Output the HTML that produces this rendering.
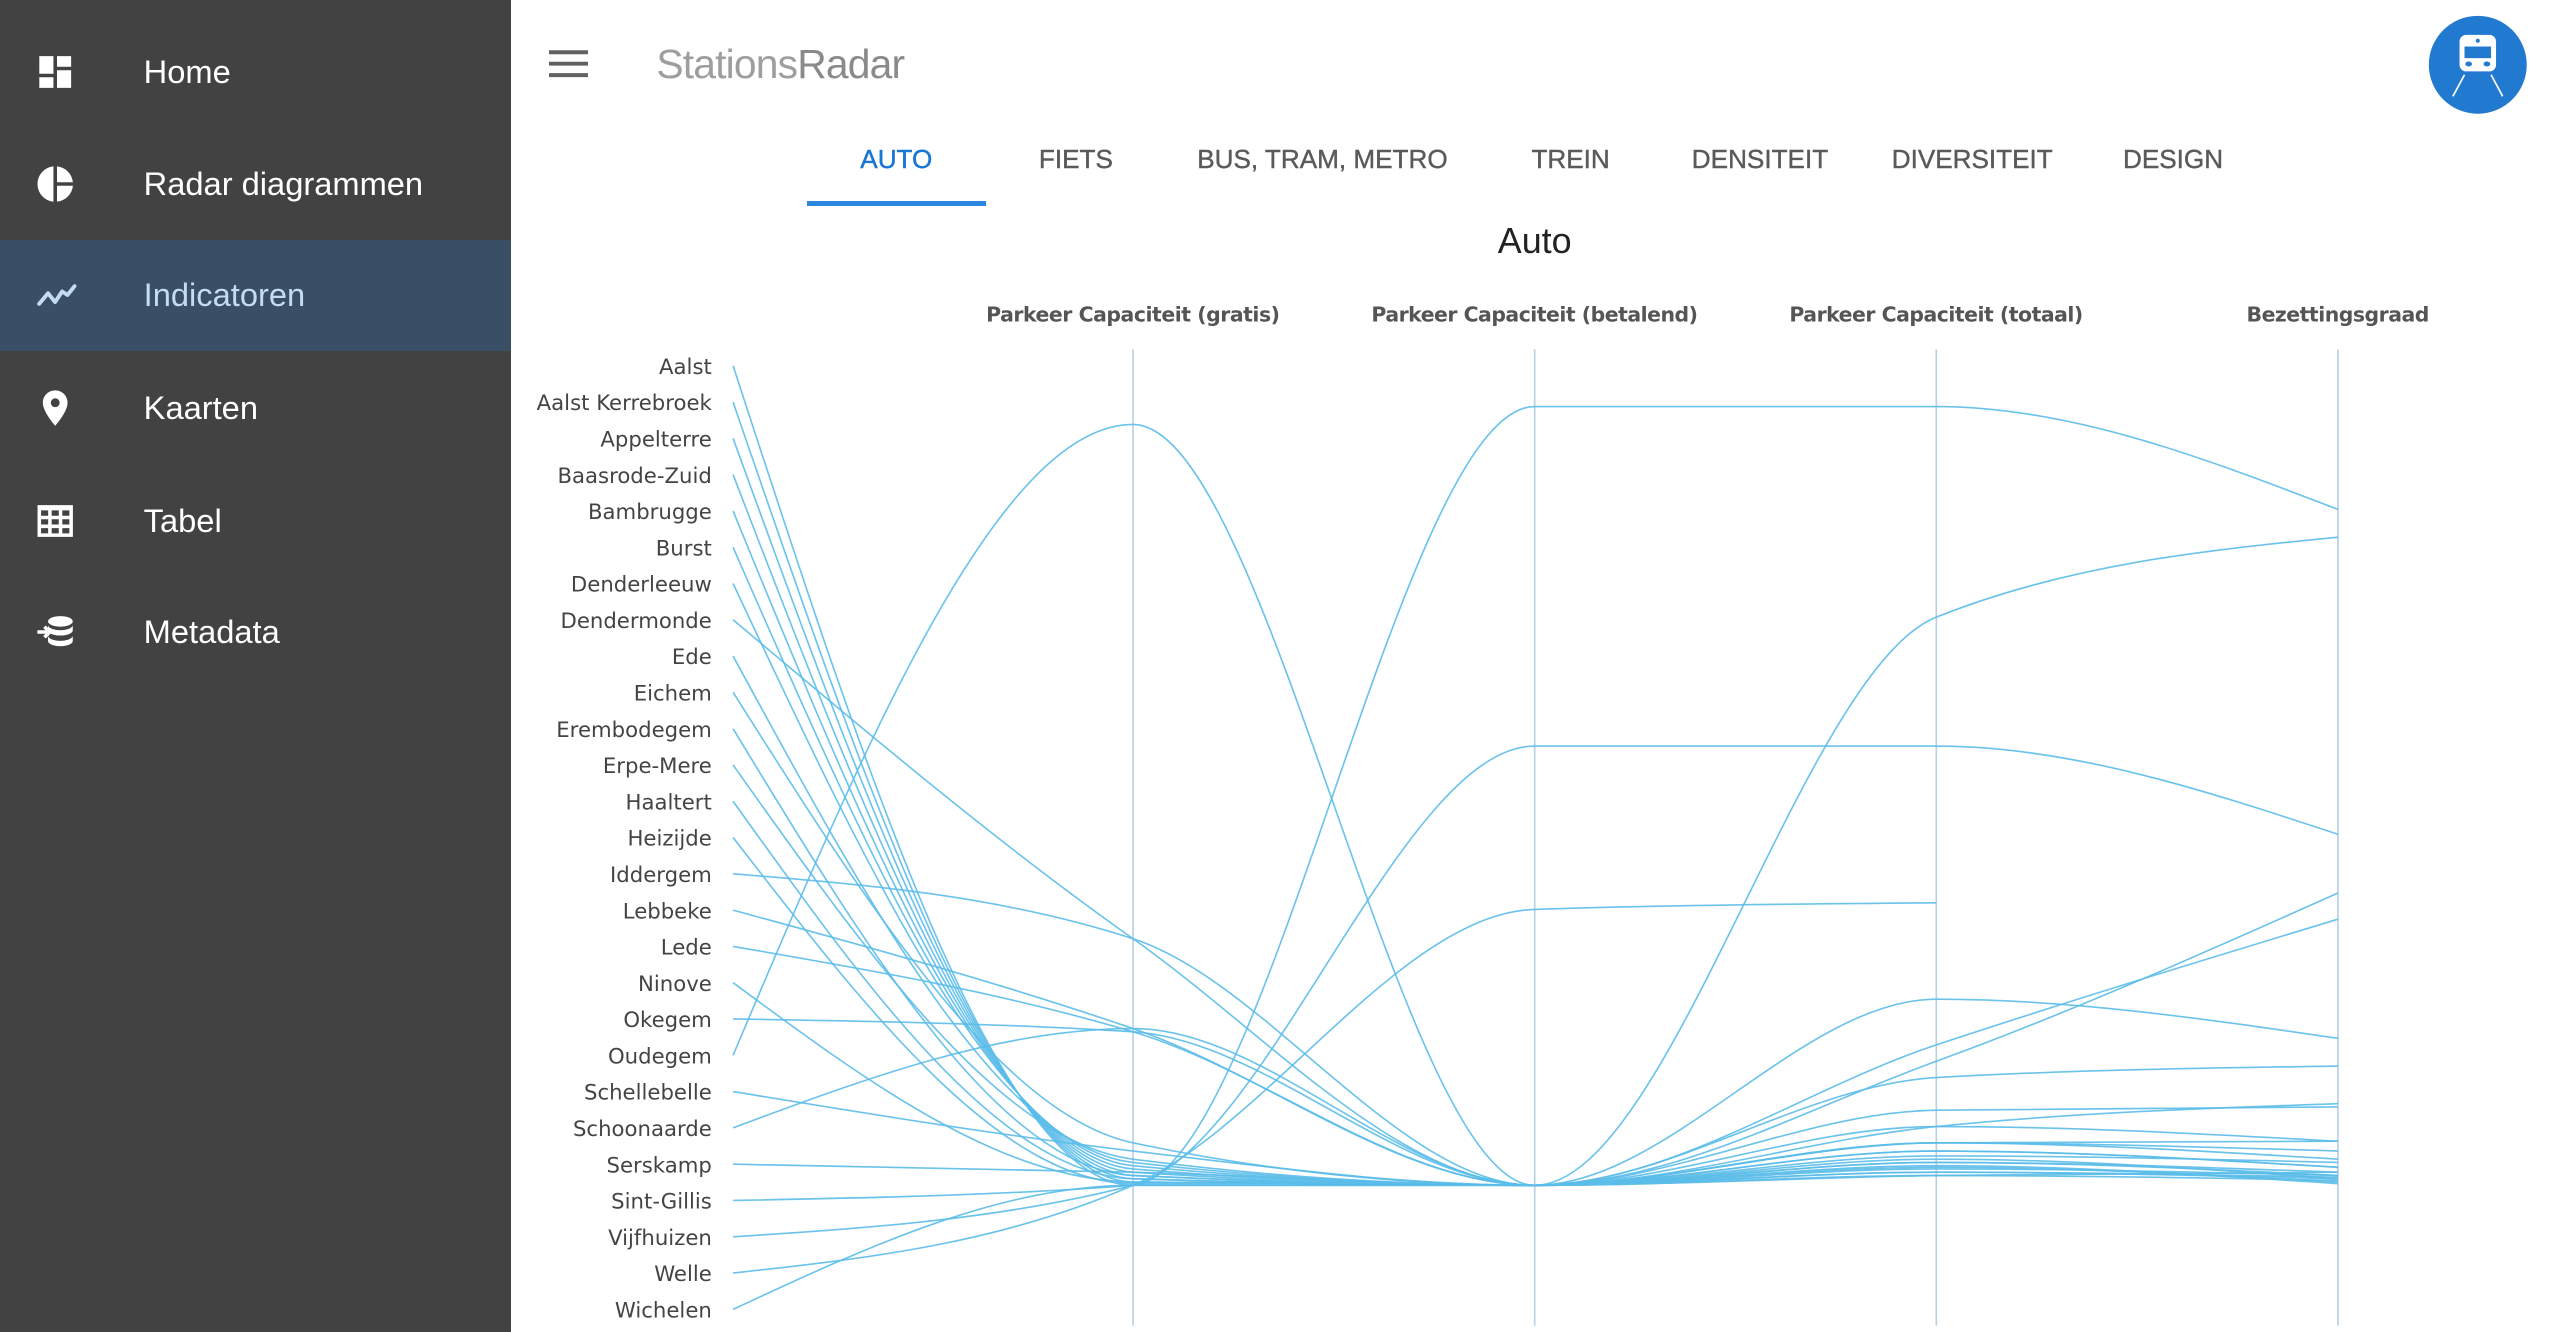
<!DOCTYPE html>
<html><head><meta charset="utf-8">
<style>
html,body{margin:0;padding:0;background:#fff;overflow:hidden}
#root{width:1568px;height:816px;position:relative;zoom:1.632653;font-family:"Liberation Sans",sans-serif}
#side{position:absolute;left:0;top:0;width:313px;height:816px;background:#424242}
.item{position:absolute;left:0;width:313px;height:68px;color:#fff;font-size:20px}
.item span{position:absolute;left:88px;top:50%;transform:translateY(-50%)}
.item svg{position:absolute;left:21px;top:50%;transform:translateY(-50%)}
.act{background:#3a4f65;color:#c3dcf3}
#title{position:absolute;left:402px;top:25px;font-size:25px;color:#9e9e9e;letter-spacing:-0.5px}
#title b{font-weight:normal;color:#8a8a8a}
.tab{position:absolute;top:88px;font-size:16px;color:#5a5a5a;transform:translateX(-50%);white-space:nowrap;-webkit-text-stroke:0.25px currentColor}
#chartT{position:absolute;left:940px;top:135px;transform:translateX(-50%);font-size:22px;color:#222}
</style></head><body>
<div id="root">
<div id="side">
 <div class="item" style="top:10px"><svg width="26" height="26" viewBox="0 0 24 24"><path fill="#fff" d="M3 3h8v10H3zM13 3h8v6h-8zM3 15h8v6H3zM13 11h8v10h-8z"/></svg><span>Home</span></div>
 <div class="item" style="top:79px"><svg width="26" height="26" viewBox="0 0 24 24"><path fill="#fff" d="M11 2v20C5.9 21.5 2 17.2 2 12S5.9 2.5 11 2zm2 0v9h9c-.5-4.8-4.2-8.5-9-9zm0 11v9c4.8-.5 8.5-4.2 9-9z"/></svg><span>Radar diagrammen</span></div>
 <div class="item act" style="top:147px"><svg width="28" height="26" viewBox="0 0 24 24"><path fill="none" stroke="#c3dcf3" stroke-width="2.2" stroke-linecap="round" stroke-linejoin="round" d="M2 17l5-6 4 5 4-6 3 2 4-5"/></svg><span>Indicatoren</span></div>
 <div class="item" style="top:216px"><svg width="26" height="28" viewBox="0 0 24 24"><path fill="#fff" d="M12 2C8.1 2 5 5.1 5 9c0 5.2 7 13 7 13s7-7.8 7-13c0-3.9-3.1-7-7-7zm0 9.5a2.5 2.5 0 110-5 2.5 2.5 0 010 5z"/></svg><span>Kaarten</span></div>
 <div class="item" style="top:285px"><svg width="26" height="26" viewBox="0 0 24 24"><path fill="#fff" d="M2 3h20v18H2z"/><path fill="#424242" d="M4 6h4v3H4zM10 6h4v3h-4zM16 6h4v3h-4zM4 11h4v3H4zM10 11h4v3h-4zM16 11h4v3h-4zM4 16h4v3H4zM10 16h4v3h-4zM16 16h4v3h-4z"/></svg><span>Tabel</span></div>
 <div class="item" style="top:353px"><svg width="28" height="26" viewBox="0 0 24 24"><ellipse cx="14" cy="6" rx="7" ry="3" fill="#fff"/><path fill="#fff" d="M7 8v3c0 1.7 3.1 3 7 3s7-1.3 7-3V8c0 1.7-3.1 3-7 3s-7-1.3-7-3zM7 14v3c0 1.7 3.1 3 7 3s7-1.3 7-3v-3c0 1.7-3.1 3-7 3s-7-1.3-7-3z"/><path fill="none" stroke="#fff" stroke-width="2" d="M1 12h7M5 9l3 3-3 3"/></svg><span>Metadata</span></div>
</div>
<svg style="position:absolute;left:336px;top:30px" width="24" height="18" viewBox="0 0 24 18"><path d="M0 2h24M0 9h24M0 16h24" stroke="#616161" stroke-width="2.4"/></svg>
<div id="title">Stations<b>Radar</b></div>
<svg style="position:absolute;left:1487px;top:9px" width="61" height="61" viewBox="0 0 60 60"><circle cx="30" cy="30" r="29.5" fill="#2179d0"/><rect x="19" y="12" width="22" height="22" rx="4" fill="#fff"/><rect x="22" y="19" width="16" height="7" fill="#2179d0"/><circle cx="30" cy="15.5" r="1.2" fill="#2179d0"/><ellipse cx="24.5" cy="29.5" rx="2" ry="1.5" fill="#2179d0"/><ellipse cx="35.5" cy="29.5" rx="2" ry="1.5" fill="#2179d0"/><path d="M22 36l-7 13M38 36l7 13" stroke="#fff" stroke-width="1"/></svg>
<div class="tab" style="left:549px;color:#1976d2">AUTO</div>
<div style="position:absolute;left:494px;top:123px;width:110px;height:3px;background:#2b86e0"></div>
<div class="tab" style="left:659px">FIETS</div>
<div class="tab" style="left:810px">BUS, TRAM, METRO</div>
<div class="tab" style="left:962px">TREIN</div>
<div class="tab" style="left:1078px">DENSITEIT</div>
<div class="tab" style="left:1208px">DIVERSITEIT</div>
<div class="tab" style="left:1331px">DESIGN</div>
<div id="chartT">Auto</div>
<svg id="ch" style="position:absolute;left:0;top:0" width="1568" height="816" viewBox="0 0 1568 816" font-family="DejaVu Sans, sans-serif">
<g font-size="12.5" font-weight="bold" fill="#555" text-anchor="middle">
<text x="694" y="197" textLength="180">Parkeer Capaciteit (gratis)</text>
<text x="940" y="197" textLength="200">Parkeer Capaciteit (betalend)</text>
<text x="1186" y="197" textLength="180">Parkeer Capaciteit (totaal)</text>
<text x="1432" y="197" textLength="112">Bezettingsgraad</text>
</g>
<g stroke="#b7d0e4" stroke-width="1"><path d="M694 214V812M940 214V812M1186 214V812M1432 214V812"/></g>
<g id="labs" font-size="13" fill="#444" text-anchor="end"></g>
<g id="lines" fill="none" stroke="#5bbde9" stroke-width="1" stroke-opacity="0.9"></g>
</svg>
</div>
<script>
var names=["Aalst","Aalst Kerrebroek","Appelterre","Baasrode-Zuid","Bambrugge","Burst","Denderleeuw","Dendermonde","Ede","Eichem","Erembodegem","Erpe-Mere","Haaltert","Heizijde","Iddergem","Lebbeke","Lede","Ninove","Okegem","Oudegem","Schellebelle","Schoonaarde","Serskamp","Sint-Gillis","Vijfhuizen","Welle","Wichelen"];
var d=[[726,726,720,718],[724,726,710,722],[722,726,700,699],[720,726,705,715],[718,726,690,676],[716,726,712,720],[714,726,715,724],[575,726,650,547],[712,726,708,712],[700,726,718,722],[720,726,680,678],[710,726,700,705],[722,726,716,720],[725,726,712,718],[575,726,612,636],[630,726,720,723],[632,726,660,653],[724,726,718,721],[632,726,700,710],[260,726,714,725],[705,726,690,699],[630,726,640,563],[718,726,705,715],[726,249,249,312],[726,457,457,511],[726,557,553,null],[726,726,378,329]];
var labs=document.getElementById('labs'),lines=document.getElementById('lines'),ns="http://www.w3.org/2000/svg";
function mono(xs,ys){var n=xs.length,h=[],s=[],t=[];for(var i=0;i<n-1;i++){h[i]=xs[i+1]-xs[i];s[i]=(ys[i+1]-ys[i])/h[i];}
for(i=1;i<n-1;i++){var p=(s[i-1]*h[i]+s[i]*h[i-1])/(h[i-1]+h[i]);t[i]=(Math.sign(s[i-1])+Math.sign(s[i]))*Math.min(Math.abs(s[i-1]),Math.abs(s[i]),0.5*Math.abs(p))||0;}
if(n>2){t[0]=(3*s[0]-t[1])/2;t[n-1]=(3*s[n-2]-t[n-2])/2;}else{t[0]=t[1]=s[0];}
var r="M"+xs[0]+" "+ys[0];for(i=0;i<n-1;i++){var k=h[i]/3;r+="C"+(xs[i]+k)+" "+(ys[i]+k*t[i])+" "+(xs[i+1]-k)+" "+(ys[i+1]-k*t[i+1])+" "+xs[i+1]+" "+ys[i+1];}return r;}
names.forEach(function(nm,i){var y=224+i*22.23;var t=document.createElementNS(ns,'text');t.setAttribute('x',436);t.setAttribute('y',y+5);t.textContent=nm;labs.appendChild(t);
var xs=[449],ys=[y],ax=[694,940,1186,1432];d[i].forEach(function(v,j){if(v!==null){xs.push(ax[j]);ys.push(v);}});
var p=document.createElementNS(ns,'path');p.setAttribute('d',mono(xs,ys));lines.appendChild(p);});
</script>
</body></html>
